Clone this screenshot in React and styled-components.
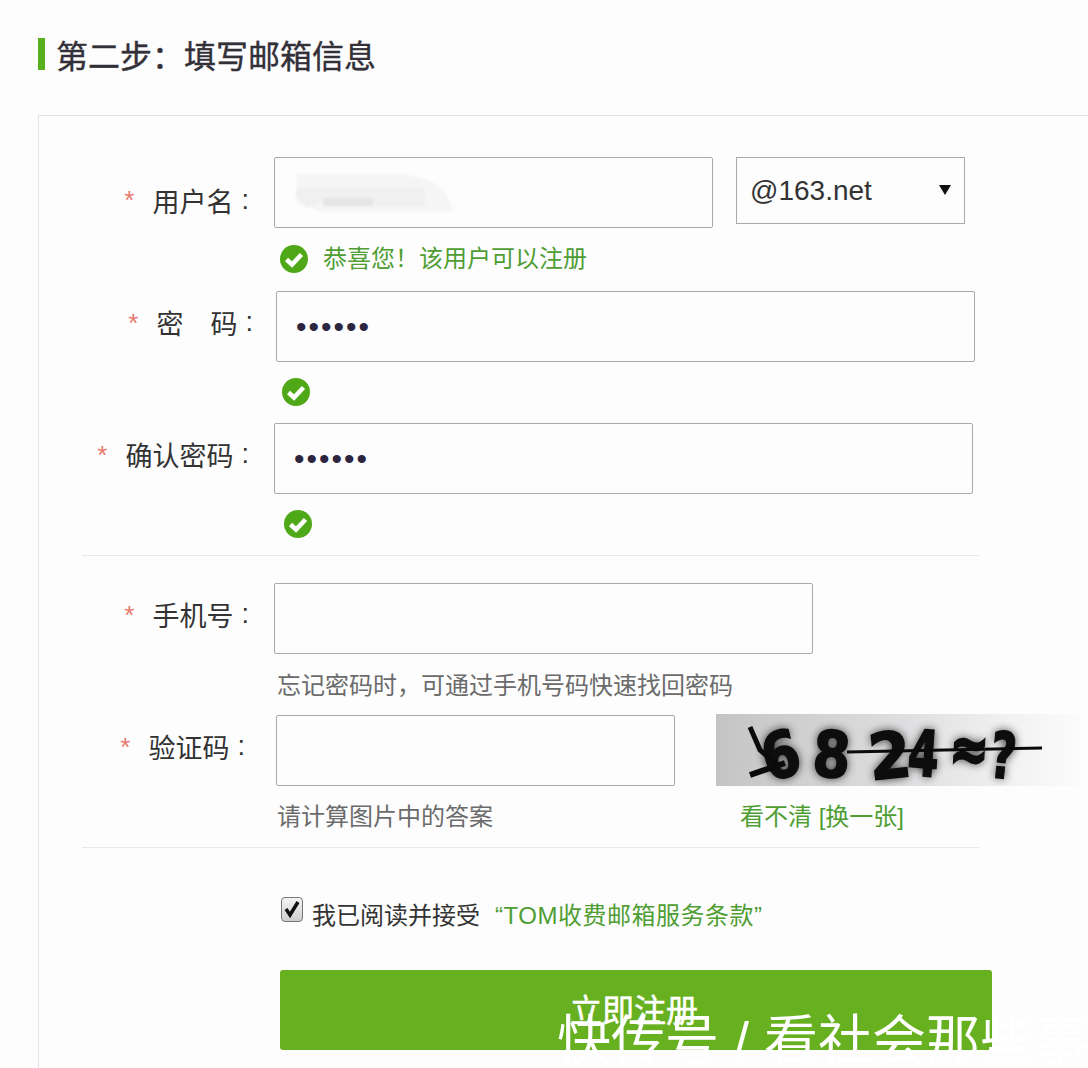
import React from "react";
import styled, { createGlobalStyle } from "styled-components";

const GlobalStyle = createGlobalStyle`
  html, body {
    margin: 0;
    padding: 0;
    background: #fdfdfe;
  }
  body {
    font-family: "Liberation Sans", "Noto Sans CJK SC", sans-serif;
  }
`;

const Page = styled.div`
  position: relative;
  width: 1088px;
  height: 1068px;
  overflow: hidden;
  box-sizing: border-box;
  padding: 38px 0 0 38px;
  background: #fdfdfe;
`;

const Heading = styled.h2`
  display: flex;
  align-items: center;
  gap: 11px;
  height: 32px;
  margin: 0 0 45px;
  font-size: 32px;
  font-weight: 400;
  color: #333038;
  -webkit-text-stroke: 0.4px #333038;
  &::before {
    content: "";
    width: 7px;
    height: 32px;
    background: #58b01e;
  }
`;

const Panel = styled.div`
  box-sizing: border-box;
  height: 953px;
  padding-top: 41px;
  border-top: 1px solid #e2e3e6;
  border-left: 1px solid #e2e3e6;
`;

const Field = styled.div`
  display: flex;
  align-items: flex-start;
  height: 70px;
`;

const Label = styled.label`
  box-sizing: border-box;
  flex: none;
  display: flex;
  justify-content: flex-end;
  align-items: center;
  width: ${(p) => p.$end - 39}px;
  height: 70px;
  padding-top: ${(p) => p.$drop || 0}px;
  padding-bottom: ${(p) => (p.$drop ? 0 : 7)}px;
  font-size: 27px;
  color: #333;
  white-space: pre;
`;

const Star = styled.span`
  margin-right: 18px;
  font-size: 26px;
  line-height: 26px;
  color: #e8796c;
`;

const Colon = styled.span`
  margin-left: 8px;
`;

const InputBox = styled.div`
  position: relative;
  flex: none;
  box-sizing: border-box;
  width: ${(p) => p.$width}px;
  height: 71px;
  margin-left: ${(p) => p.$gap}px;
  border: 1px solid #a9abab;
  border-radius: 2px;
  background: #fdfdfe;
`;

const TextInput = styled.input`
  box-sizing: border-box;
  width: 100%;
  height: 100%;
  padding: 0 18px 0 19px;
  border: 0;
  outline: 0;
  background: transparent;
  font-family: "Liberation Sans", sans-serif;
  font-size: 30px;
  letter-spacing: 2px;
  color: #2b2540;
`;

const Blur = styled.svg`
  position: absolute;
  left: 18px;
  top: 12px;
  filter: blur(1px);
`;

const SelectBox = styled.div`
  position: relative;
  flex: none;
  box-sizing: border-box;
  width: 229px;
  height: 67px;
  margin-left: 23px;
  border: 1px solid #a9abab;
  background: #fdfdfe;
  &::after {
    content: "";
    position: absolute;
    right: 13px;
    top: 27px;
    border-left: 6px solid transparent;
    border-right: 6px solid transparent;
    border-top: 10px solid #111;
  }
`;

const Select = styled.select`
  appearance: none;
  width: 100%;
  height: 100%;
  padding: 0 0 0 13px;
  border: 0;
  outline: 0;
  background: transparent;
  font-family: "Liberation Sans", sans-serif;
  font-size: 28px;
  color: #333;
`;

const Note = styled.div`
  display: flex;
  align-items: center;
  gap: ${(p) => p.$gap || 0}px;
  box-sizing: border-box;
  height: ${(p) => p.$height}px;
  padding-left: ${(p) => p.$left - 39}px;
  padding-bottom: ${(p) => p.$lift || 0}px;
  font-size: 24px;
  color: ${(p) => (p.$green ? "#4f9d33" : "#6b6b6b")};
  white-space: nowrap;
`;

const NoteText = styled.span`
  margin-bottom: 4px;
`;

const Divider = styled.hr`
  width: 897px;
  height: 1px;
  margin: 0 0 ${(p) => p.$after}px 43px;
  border: 0;
  background: #e4ebe2;
`;

const Captcha = styled.svg`
  flex: none;
  margin-left: 41px;
  margin-top: -1px;
`;

const LinkText = styled.a`
  margin-left: ${(p) => p.$gap || 0}px;
  letter-spacing: ${(p) => p.$spread || 0}px;
  color: #4f9d33;
  text-decoration: none;
`;

const Agree = styled.div`
  display: flex;
  align-items: center;
  box-sizing: border-box;
  height: 28px;
  margin: 50px 0 44px 242px;
  padding-top: 2px;
  font-size: 24px;
  color: #333;
  white-space: nowrap;
`;

const CheckBox = styled.span`
  box-sizing: border-box;
  display: flex;
  align-items: center;
  justify-content: center;
  width: 22px;
  height: 25px;
  margin-right: 9px;
  transform: translateY(-4px);
  border: 1px solid #777;
  border-radius: 4px;
  background: linear-gradient(#f4f4f4, #cfcfcf);
`;

const SubmitButton = styled.button`
  display: block;
  width: 712px;
  height: 80px;
  margin-left: 241px;
  padding: 0 4px 4px 0;
  border: 0;
  border-radius: 3px;
  background: #67b01f;
  font-family: inherit;
  font-size: 32px;
  color: #fff;
  -webkit-text-stroke: 0.5px #fff;
`;

const Watermark = styled.div`
  position: absolute;
  left: 557px;
  top: 1005px;
  font-size: 54px;
  line-height: 72px;
  color: #fff;
  white-space: nowrap;
`;

function CheckIcon() {
  return (
    <svg width="28" height="28" viewBox="0 0 28 28">
      <circle cx="14" cy="14" r="14" fill="#4fa818" />
      <path d="M6.5 14.5l5.5 5L21.5 9.5" fill="none" stroke="#fff" strokeWidth="4.5" />
    </svg>
  );
}

const glyphs = [
  { c: "6", x: 786, y: 777, r: -14, s: 0.85 },
  { c: "8", x: 830, y: 777, r: 4, s: 0.85 },
  { c: "2", x: 892, y: 778, r: -6, s: 0.95 },
  { c: "4", x: 922, y: 776, r: 4, s: 0.7 },
  { c: "≈", x: 968, y: 771, r: 3, s: 0.75 },
  { c: "?", x: 1001, y: 778, r: 6, s: 0.7 },
];

function CaptchaGlyphs() {
  return glyphs.map((g) => (
    <text
      key={g.c}
      transform={`translate(${g.x} ${g.y}) rotate(${g.r}) scale(${g.s} 1)`}
      textAnchor="middle"
    >
      {g.c}
    </text>
  ));
}

function CaptchaImage() {
  return (
    <Captcha width="372" height="72" viewBox="716 714 372 72">
      <defs>
        <linearGradient id="captchaBg" x1="0" x2="1" y1="0" y2="0">
          <stop offset="0" stopColor="#c4c4c4" />
          <stop offset="0.5" stopColor="#dedee0" />
          <stop offset="0.8" stopColor="#f2f2f3" />
          <stop offset="1" stopColor="#fdfdfe" />
        </linearGradient>
        <filter id="captchaShadow" x="-20%" y="-40%" width="140%" height="180%">
          <feGaussianBlur stdDeviation="5" />
        </filter>
        <filter id="captchaSoft" x="-5%" y="-20%" width="110%" height="140%">
          <feGaussianBlur stdDeviation="0.7" />
        </filter>
      </defs>
      <rect x="716" y="714" width="372" height="72" fill="url(#captchaBg)" />
      <g fontFamily="DejaVu Sans, sans-serif" fontWeight="700" fontSize="64">
        <g filter="url(#captchaShadow)" opacity="0.85">
          <CaptchaGlyphs />
        </g>
        <g fill="#0a0a0a" stroke="#0a0a0a" strokeWidth="1.5" filter="url(#captchaSoft)">
          <CaptchaGlyphs />
        </g>
      </g>
      <path d="M750 727l10 23 15 13" fill="none" stroke="#0a0a0a" strokeWidth="5" />
      <path d="M750 775L785 763" stroke="#0a0a0a" strokeWidth="6" />
      <path d="M847 752L1042 748" stroke="#0a0a0a" strokeWidth="3" />
    </Captcha>
  );
}

export default function App() {
  return (
    <Page>
      <GlobalStyle />
      <Heading>第二步：填写邮箱信息</Heading>
      <Panel>
        <Field>
          <Label $end={249} $drop={16}>
            <Star>*</Star>用户名<Colon>:</Colon>
          </Label>
          <InputBox $width={439} $gap={25}>
            <Blur width="164" height="46" viewBox="0 0 164 46">
              <path d="M4 4h100q50 2 56 38H28L4 32z" fill="#f5f5f6" />
              <path d="M4 18h128v18H46L30 30 14 38 2 26z" fill="#f0f0f1" />
              <rect x="30" y="28" width="50" height="8" fill="#e6e6e7" />
            </Blur>
          </InputBox>
          <SelectBox>
            <Select defaultValue="@163.net">
              <option>@163.net</option>
            </Select>
          </SelectBox>
        </Field>
        <Note $height={64} $left={280} $gap={15} $lift={1} $green>
          <CheckIcon />
          <NoteText>恭喜您！该用户可以注册</NoteText>
        </Note>

        <Field>
          <Label $end={253}>
            <Star>*</Star>密　码<Colon>:</Colon>
          </Label>
          <InputBox $width={699} $gap={23}>
            <TextInput type="password" defaultValue="123456" readOnly />
          </InputBox>
        </Field>
        <Note $height={62} $left={282}>
          <CheckIcon />
        </Note>

        <Field>
          <Label $end={249}>
            <Star>*</Star>确认密码<Colon>:</Colon>
          </Label>
          <InputBox $width={699} $gap={25}>
            <TextInput type="password" defaultValue="123456" readOnly />
          </InputBox>
        </Field>
        <Note $height={62} $left={284}>
          <CheckIcon />
        </Note>
        <Divider $after={27} />

        <Field>
          <Label $end={249}>
            <Star>*</Star>手机号<Colon>:</Colon>
          </Label>
          <InputBox $width={539} $gap={25} />
        </Field>
        <Note $height={62} $left={277} $lift={2}>
          忘记密码时，可通过手机号码快速找回密码
        </Note>

        <Field>
          <Label $end={245}>
            <Star>*</Star>验证码<Colon>:</Colon>
          </Label>
          <InputBox $width={399} $gap={31} />
          <CaptchaImage />
        </Field>
        <Note $height={62} $left={277} $lift={4}>
          请计算图片中的答案
          <LinkText href="#" $gap={247}>
            看不清 [换一张]
          </LinkText>
        </Note>
        <Divider $after={0} />

        <Agree>
          <CheckBox>
            <svg width="16" height="18" viewBox="0 0 16 18">
              <path d="M2 9l4 6 8-13" fill="none" stroke="#111" strokeWidth="3.5" />
            </svg>
          </CheckBox>
          我已阅读并接受
          <LinkText href="#" $gap={15} $spread={0.5}>
            “TOM收费邮箱服务条款”
          </LinkText>
        </Agree>
        <SubmitButton type="button">立即注册</SubmitButton>
      </Panel>
      <Watermark>快传号 / 看社会那些事</Watermark>
    </Page>
  );
}
